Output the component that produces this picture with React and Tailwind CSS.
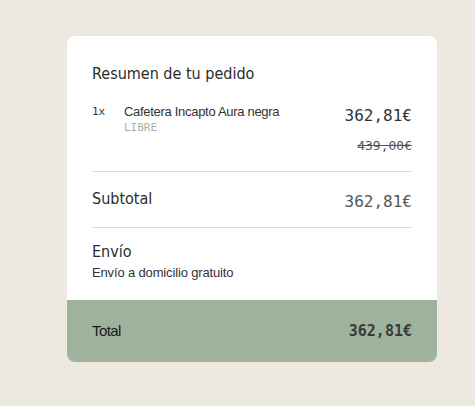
import React from 'react';

const cond = { fontFamily: '"DejaVu Sans Condensed", "DejaVu Sans", sans-serif' };

export default function App() {
    return (
        <div className="min-h-[406px] w-[475px] bg-[#ede8e0] pl-[67px] pt-[36px]">
            <div className="w-[370px] rounded-lg bg-white overflow-hidden">
                <div className="px-[25px] pt-[26px]">
                    {/* Titulo */}
                    <h2 className="text-[16px] leading-6 text-[#2b2b2b]" style={cond}>Resumen de tu pedido</h2>

                    {/* Producto */}
                    <div className="mt-[18px] flex justify-between items-start">
                        <div className="flex items-start">
                            <span className="w-8 font-['DejaVu_Sans_Mono',monospace] text-[11px] leading-4 text-[#333]">1x</span>
                            <div>
                                <div className="font-['Liberation_Sans',Arial,sans-serif] text-[13px] leading-4 tracking-[-0.3px] text-[#333]">Cafetera Incapto Aura negra</div>
                                <div className="font-['DejaVu_Sans_Mono',monospace] text-[11px] leading-4 text-[#a3b59f]">LIBRE</div>
                            </div>
                        </div>
                        <div className="flex flex-col items-end">
                            <span className="font-['DejaVu_Sans_Mono',monospace] text-[16px] leading-6 text-[#333]">362,81€</span>
                            <span className="mt-[10px] font-['DejaVu_Sans_Mono',monospace] text-[13px] leading-4 text-[#555] line-through">439,00€</span>
                        </div>
                    </div>

                    <div className="mt-[17px] border-t border-[#dcdcdc]" />

                    {/* Subtotal */}
                    <div className="flex justify-between items-center h-[55px]">
                        <span className="text-[16px] text-[#2b2b2b] -mt-[2px]" style={cond}>Subtotal</span>
                        <span className="font-['DejaVu_Sans_Mono',monospace] text-[16px] text-[#555] mt-[4px]">362,81€</span>
                    </div>

                    <div className="border-t border-[#dcdcdc]" />

                    {/* Envio */}
                    <div className="pt-[12px] pb-[19px]">
                        <div className="text-[16px] leading-6 text-[#2b2b2b]" style={cond}>Envío</div>
                        <div className="font-['Liberation_Sans',Arial,sans-serif] text-[13px] leading-4 tracking-[-0.15px] text-[#333] mt-[1px]">Envío a domicilio gratuito</div>
                    </div>
                </div>

                {/* Total */}
                <div className="h-[62px] bg-[#9fb39c] px-[25px] flex justify-between items-center">
                    <span className="font-['Liberation_Sans',Arial,sans-serif] text-[15px] tracking-[-0.6px] text-[#1a1a1a]">Total</span>
                    <span className="font-['DejaVu_Sans_Mono',monospace] text-[15px] font-bold text-[#3a3a3a]">362,81€</span>
                </div>
            </div>
        </div>
    );
}
